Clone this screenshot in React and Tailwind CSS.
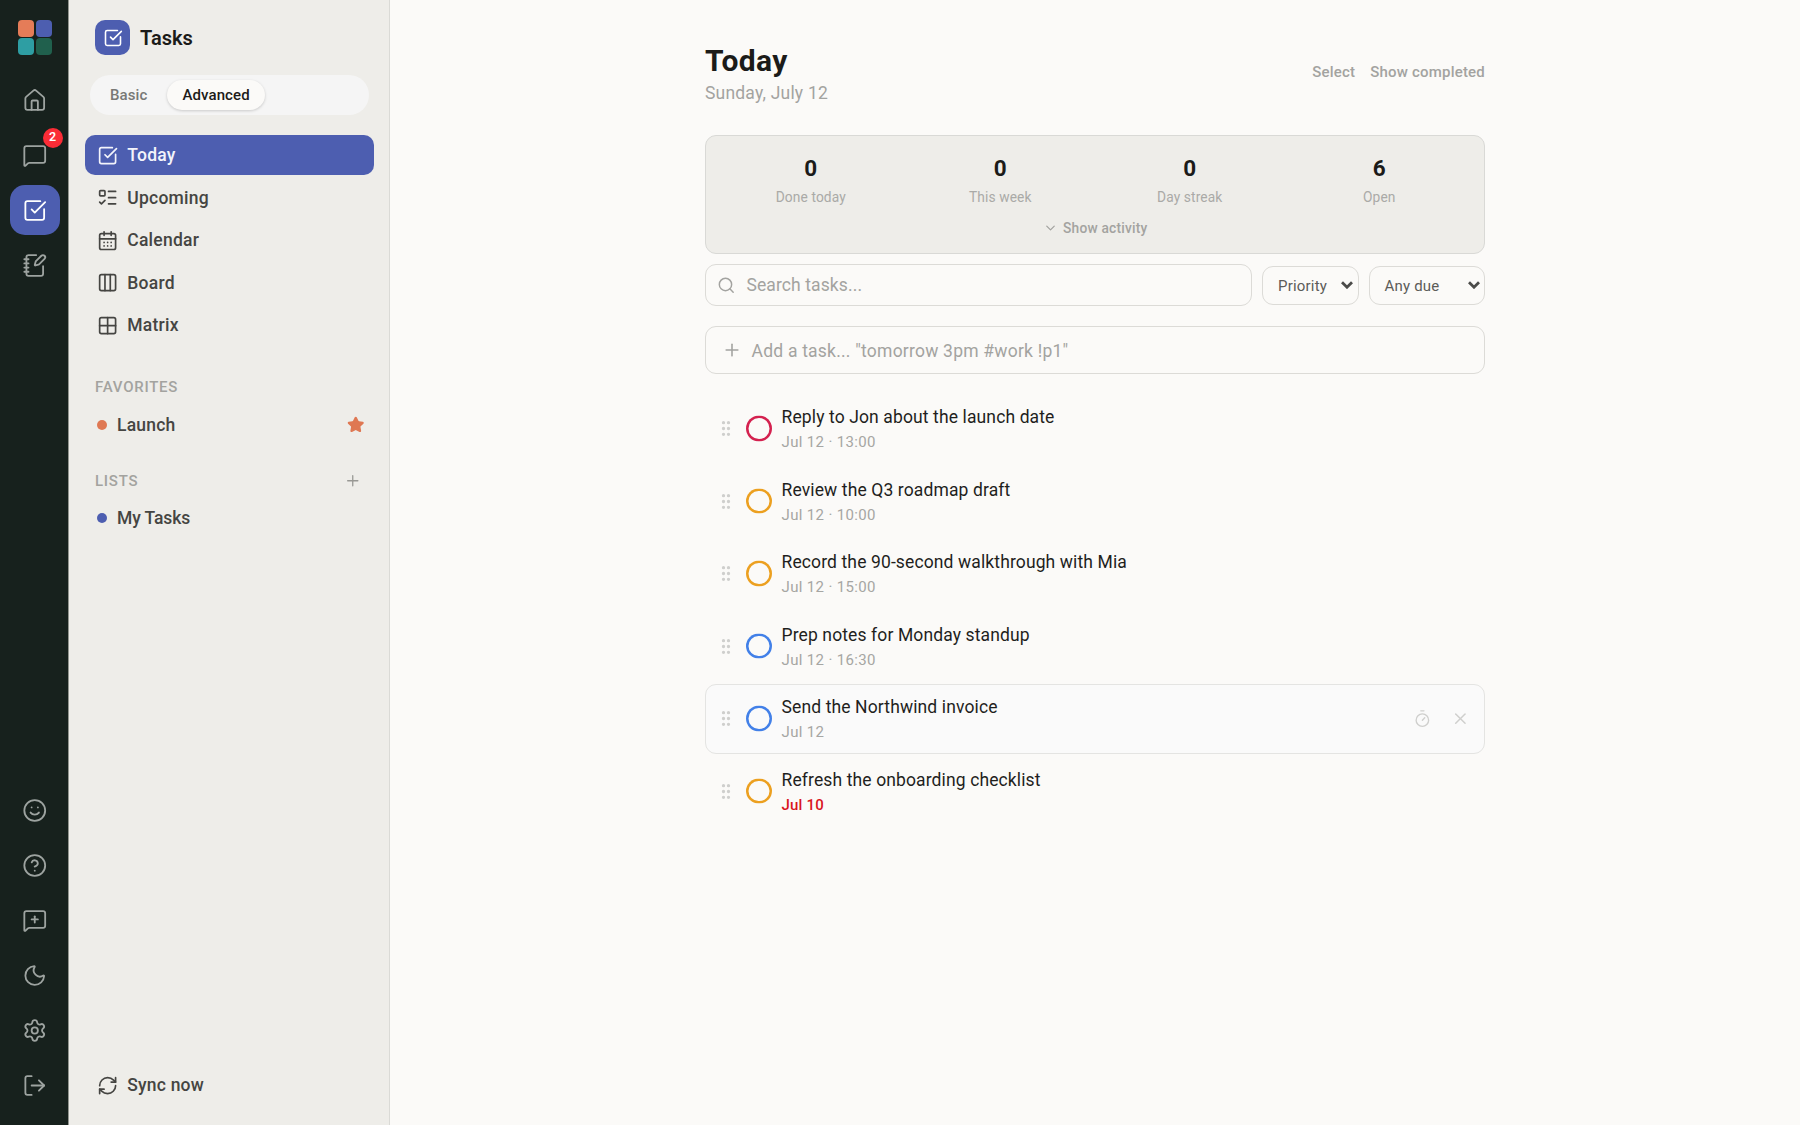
import { useState } from "react";
import {
  CalendarDays,
  ChevronDown,
  CircleQuestionMark,
  Columns3,
  Grid2x2,
  GripVertical,
  House,
  ListTodo,
  LogOut,
  MessageSquare,
  MessageSquarePlus,
  Moon,
  NotebookPen,
  Plus,
  RefreshCw,
  Search,
  Settings,
  Smile,
  SquareCheckBig,
  Star,
  Timer,
  X,
} from "lucide-react";

const railTop = [
  { id: "home", icon: House },
  { id: "chat", icon: MessageSquare, badge: 2 },
  { id: "tasks", icon: SquareCheckBig },
  { id: "notes", icon: NotebookPen },
];

const railBottom = [
  { id: "mood", icon: Smile },
  { id: "help", icon: CircleQuestionMark },
  { id: "feedback", icon: MessageSquarePlus },
  { id: "theme", icon: Moon },
  { id: "settings", icon: Settings },
  { id: "logout", icon: LogOut },
];

const views = [
  { name: "Today", icon: SquareCheckBig },
  { name: "Upcoming", icon: ListTodo },
  { name: "Calendar", icon: CalendarDays },
  { name: "Board", icon: Columns3 },
  { name: "Matrix", icon: Grid2x2 },
];

const stats = [
  { value: 0, label: "Done today" },
  { value: 0, label: "This week" },
  { value: 0, label: "Day streak" },
  { value: 6, label: "Open" },
];

const tasks = [
  { title: "Reply to Jon about the launch date", due: "Jul 12 · 13:00", ring: "inset-ring-[#d4214f]" },
  { title: "Review the Q3 roadmap draft", due: "Jul 12 · 10:00", ring: "inset-ring-[#eca020]" },
  { title: "Record the 90-second walkthrough with Mia", due: "Jul 12 · 15:00", ring: "inset-ring-[#eca020]" },
  { title: "Prep notes for Monday standup", due: "Jul 12 · 16:30", ring: "inset-ring-[#4280e8]" },
  { title: "Send the Northwind invoice", due: "Jul 12", ring: "inset-ring-[#4280e8]", hovered: true },
  { title: "Refresh the onboarding checklist", due: "Jul 10", ring: "inset-ring-[#eca020]", overdue: true },
];

const RailButton = ({ icon: Icon, badge, active }) => (
  <button
    className={`relative flex size-[50px] items-center justify-center rounded-[15px] ${
      active ? "bg-[#4d5eb0] text-white" : "text-[#9da3a0]"
    }`}
  >
    <Icon size={25} strokeWidth={1.75} className="-translate-x-[0.75px]" />
    {badge && (
      <span className="absolute -top-[2.5px] -right-[2.5px] flex size-5 items-center justify-center rounded-full bg-[#fb2c36] text-[12.5px] font-semibold text-white">
        {badge}
      </span>
    )}
  </button>
);

const Rail = () => (
  <aside className="flex w-[69px] shrink-0 flex-col border-r border-[#92958f] bg-[#17211d] pt-5 pb-[15px] pl-[10px]">
    <div className="ml-2 grid w-[34px] grid-cols-2 gap-[1.5px]">
      <span className="h-[16.5px] rounded-[4px] bg-[#e57c58]" />
      <span className="h-[16.5px] rounded-[4px] bg-[#4d5eb0]" />
      <span className="h-[16.5px] rounded-[4px] bg-[#2e9ea3]" />
      <span className="h-[16.5px] rounded-[4px] bg-[#20604d]" />
    </div>
    <nav className="mt-[20.5px] flex flex-col gap-[5px]">
      {railTop.map((item) => (
        <RailButton key={item.id} {...item} active={item.id === "tasks"} />
      ))}
    </nav>
    <nav className="mt-auto flex flex-col gap-[5px]">
      {railBottom.map((item) => (
        <RailButton key={item.id} {...item} />
      ))}
    </nav>
  </aside>
);

const Sidebar = () => {
  const [view, setView] = useState("Today");
  const [mode, setMode] = useState("Advanced");

  return (
    <aside className="flex w-[321px] shrink-0 flex-col border-r border-[#dadad6] bg-[#eeede9] px-[15px] pt-5 pb-5 pl-4 text-[17.5px] font-medium text-[#454542]">
      {/* Header */}
      <div className="ml-[10px] flex items-center gap-[10px]">
        <div className="flex size-[35px] items-center justify-center rounded-[10px] bg-[#4d5eb0] text-white">
          <SquareCheckBig size={20} strokeWidth={1.9} />
        </div>
        <span className="text-[20px] font-semibold leading-[30px] text-[#1b1b19]">Tasks</span>
      </div>

      <div className="mx-[5px] mt-5 flex h-10 rounded-full bg-[#f5f5f5] p-[5px]">
        {["Basic", "Advanced"].map((m) => (
          <button
            key={m}
            onClick={() => setMode(m)}
            className={`rounded-full px-[15px] text-[15px] tracking-[0.1px] ${
              mode === m
                ? "bg-[#fbfaf8] text-[#1b1b19] shadow-[0_1px_3px_rgba(0,0,0,0.18)]"
                : "mr-[5px] text-[#787875]"
            }`}
          >
            {m}
          </button>
        ))}
      </div>

      {/* Views */}
      <nav className="mt-5 flex flex-col gap-[2.5px]">
        {views.map(({ name, icon: Icon }) => (
          <button
            key={name}
            onClick={() => setView(name)}
            className={`flex h-10 items-center gap-[9px] rounded-[10px] px-3 pt-px tracking-[0.25px] ${
              view === name ? "bg-[#4d5eb0] text-[#f3f4fb]" : ""
            }`}
          >
            <Icon size={21.25} strokeWidth={1.9} />
            {name}
          </button>
        ))}
      </nav>

      <h2 className="mt-[32px] ml-[10px] text-[15px] leading-5 tracking-[0.75px] text-[#a3a39f]">FAVORITES</h2>
      <div className="mt-2 flex h-10 items-center px-[10px] pl-3 tracking-[0.2px]">
        <span className="mr-[10px] size-[10px] rounded-full bg-[#df7853]" />
        Launch
        <Star size={17.5} className="ml-auto fill-[#df7853] text-[#df7853]" />
      </div>

      <div className="mt-[26px] ml-[10px] flex items-center justify-between pr-[13px]">
        <h2 className="text-[15px] leading-5 tracking-[0.75px] text-[#a3a39f]">LISTS</h2>
        <Plus size={17.5} strokeWidth={1.75} className="text-[#989894]" />
      </div>
      <div className="mt-[7px] flex h-10 items-center pl-3 tracking-[-0.1px]">
        <span className="mr-[10px] size-[10px] rounded-full bg-[#4d5eb0]" />
        My Tasks
      </div>

      <button className="mt-auto flex h-10 items-center gap-[9px] px-3 pt-px tracking-[0.2px]">
        <RefreshCw size={21.25} strokeWidth={1.9} />
        Sync now
      </button>
    </aside>
  );
};

const Picker = ({ label, className }) => (
  <button
    className={`flex h-[39px] items-center justify-between rounded-[11px] border border-[#dcdbd7] pr-[4.5px] pl-[15px] text-[15px] tracking-[0.2px] text-[#5c5c59] ${className}`}
  >
    <span className="translate-y-px">{label}</span>
    <svg viewBox="0 0 12 8" className="h-2 w-3 text-[#4b4b49]" fill="none" stroke="currentColor" strokeWidth="2.8">
      <path d="M1 1.2 6 6.2 11 1.2" />
    </svg>
  </button>
);

const TaskRow = ({ title, due, ring, hovered, overdue }) => (
  <li
    className={`flex h-[70px] items-center rounded-[11px] border pr-[14.5px] pl-[10px] ${
      hovered ? "border-[#e4e4e2] bg-[#fafafa]" : "border-transparent"
    }`}
  >
    <GripVertical size={20} className="-translate-y-[0.5px] text-[#cfcfcd]" />
    <span className={`ml-[10px] size-[25.5px] -translate-y-[0.5px] rounded-full inset-ring-[2.5px] ${ring}`} />
    <div className="ml-[10px] pt-[1.5px]">
      <p className="text-[17.5px] leading-[25px] tracking-[0.12px] text-[#1f1f1d]">{title}</p>
      <p
        className={`text-[15px] leading-6 ${
          overdue ? "font-medium tracking-[0.2px] text-[#d9141e]" : "tracking-[0.35px] text-[#a6a6a3]"
        }`}
      >
        {due}
      </p>
    </div>
    {hovered && (
      <div className="ml-auto flex -translate-y-[0.75px] items-center gap-[18.75px] text-[#cfcfcd]">
        <Timer size={18.75} strokeWidth={1.75} />
        <X size={18.75} strokeWidth={1.9} />
      </div>
    )}
  </li>
);

export default function App() {
  return (
    <div className="flex h-screen overflow-hidden bg-[#fbfaf8] font-['Roboto','Noto_Sans',sans-serif] text-[#1b1b19]">
      <Rail />
      <Sidebar />

      <main className="flex-1">
        <div className="mx-auto w-[780px] pt-[42px]">
          <header className="flex items-center justify-between">
            <div>
              <h1 className="text-[30px] font-bold leading-[38.5px] tracking-[0.4px]">Today</h1>
              <p className="text-[17.5px] leading-[25px] tracking-[0.2px] text-[#a3a3a0]">Sunday, July 12</p>
            </div>
            <div className="flex gap-[15px] pb-[3px] text-[15px] font-medium tracking-[0.2px] text-[#a3a3a0]">
              <button>Select</button>
              <button>Show completed</button>
            </div>
          </header>

          {/* Stats */}
          <section className="mt-[29.5px] h-[119px] rounded-[11px] border border-[#d9d9d6] bg-[#eeede9] px-5 pt-[18px]">
            <div className="grid grid-cols-4 gap-5 text-center">
              {stats.map((s) => (
                <div key={s.label}>
                  <div className="text-[22.5px] font-bold leading-7">{s.value}</div>
                  <div className="mt-[4.5px] text-[13.75px] leading-5 tracking-[0.12px] text-[#aaaaa7]">{s.label}</div>
                </div>
              ))}
            </div>
            <button className="mx-auto mt-[11.5px] flex items-center gap-[5.5px] text-[13.75px] font-medium leading-5 tracking-[0.2px] text-[#a3a3a0]">
              <ChevronDown size={15} className="-translate-y-[0.5px]" />
              Show activity
            </button>
          </section>

          {/* Filters */}
          <div className="mt-[10px] flex items-center gap-[10px]">
            <div className="flex h-[42px] flex-1 items-center rounded-[11px] border border-[#dcdbd7] pl-[11px] text-[17.5px] tracking-[0.1px] text-[#a3a3a0]">
              <Search size={18.5} strokeWidth={1.9} className="mr-[11px]" />
              Search tasks...
            </div>
            <Picker label="Priority" className="w-[96.5px]" />
            <Picker label="Any due" className="w-[116.5px]" />
          </div>

          <div className="mt-5 flex h-[48px] items-center rounded-[11px] border border-[#dcdbd7] pl-[15.5px] text-[17.5px] tracking-[0.22px] text-[#a3a3a0]">
            <Plus size={20} strokeWidth={1.9} className="mr-[10px]" />
            <span className="translate-y-[0.5px]">Add a task... "tomorrow 3pm #work !p1"</span>
          </div>

          <ul className="mt-5 flex flex-col gap-[2.5px]">
            {tasks.map((t) => (
              <TaskRow key={t.title} {...t} />
            ))}
          </ul>
        </div>
      </main>
    </div>
  );
}
